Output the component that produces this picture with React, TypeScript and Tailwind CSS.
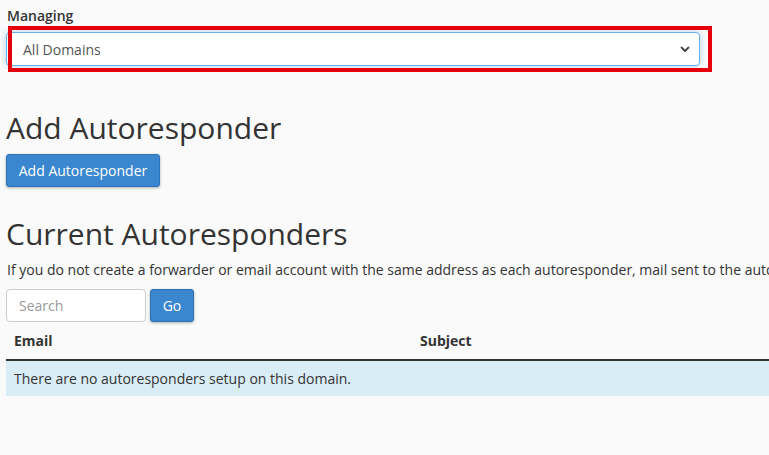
import React from "react";

export default function App() {
  return (
    <div
      className="min-h-[455px] w-[769px] overflow-hidden bg-[#fafafa] text-[#333]"
      style={{ fontFamily: '"Open Sans", "Liberation Sans", sans-serif' }}
    >
      <div className="pl-[6px]">
        <div className="relative pt-[6px]">
          <label className="block pl-[1px] text-[14px] font-semibold leading-[20px] text-[#333]">Managing</label>
          <div className="relative mt-[6px] flex h-[34px] w-[694px] items-center justify-between rounded-[4px] border border-[#66afe9] bg-white pl-[16px] pr-[8px] shadow-[0_0_6px_rgba(102,175,233,0.5)]">
            <span className="text-[14px] text-[#555]">All Domains</span>
            <svg width="12" height="12" viewBox="0 0 12 12" fill="none">
              <path d="M2.5 4.5 L6 8 L9.5 4.5" stroke="#444" strokeWidth="1.8" strokeLinecap="round" strokeLinejoin="round" />
            </svg>
          </div>
          <div className="pointer-events-none absolute left-[2px] top-[26px] h-[46px] w-[704px] border-[4px] border-[#e5000b]" />
        </div>

        <h2 className="mt-[44px] text-[30px] font-normal leading-[36px] text-[#333]">Add Autoresponder</h2>
        <button className="mt-[8px] h-[33px] w-[154px] rounded-[3px] border border-[#2c73b9] bg-[#3a87d0] text-[14px] text-white shadow-[0_1px_3px_rgba(0,0,0,0.3)]">
          Add Autoresponder
        </button>

        <h2 className="mt-[29px] text-[30px] font-normal leading-[36px] text-[#333]">Current Autoresponders</h2>
        <p className="mt-[8px] whitespace-nowrap pl-[1px] text-[14px] leading-[20px] text-[#333]">
          If you do not create a forwarder or email account with the same address as each autoresponder, mail sent to the autoresponder will not be delivered.
        </p>
        <div className="mt-[9px] flex gap-[4px]">
          <div className="flex h-[33px] w-[140px] items-center rounded-[4px] border border-[#ccc] bg-white pl-[12px] text-[14px] text-[#999]">
            Search
          </div>
          <button className="h-[33px] w-[44px] rounded-[3px] border border-[#2c73b9] bg-[#3a87d0] text-[14px] text-white shadow-[0_1px_3px_rgba(0,0,0,0.3)]">
            Go
          </button>
        </div>

        <div>
          <div className="flex h-[39px] items-center border-b-[2px] border-[#333] text-[14px] font-bold text-[#333]">
            <div className="w-[414px] pl-[8px]">Email</div>
            <div>Subject</div>
          </div>
          <div className="flex h-[35px] items-center bg-[#d9edf7] pl-[8px] text-[14px] text-[#333]">
            There are no autoresponders setup on this domain.
          </div>
        </div>
      </div>
    </div>
  );
}
